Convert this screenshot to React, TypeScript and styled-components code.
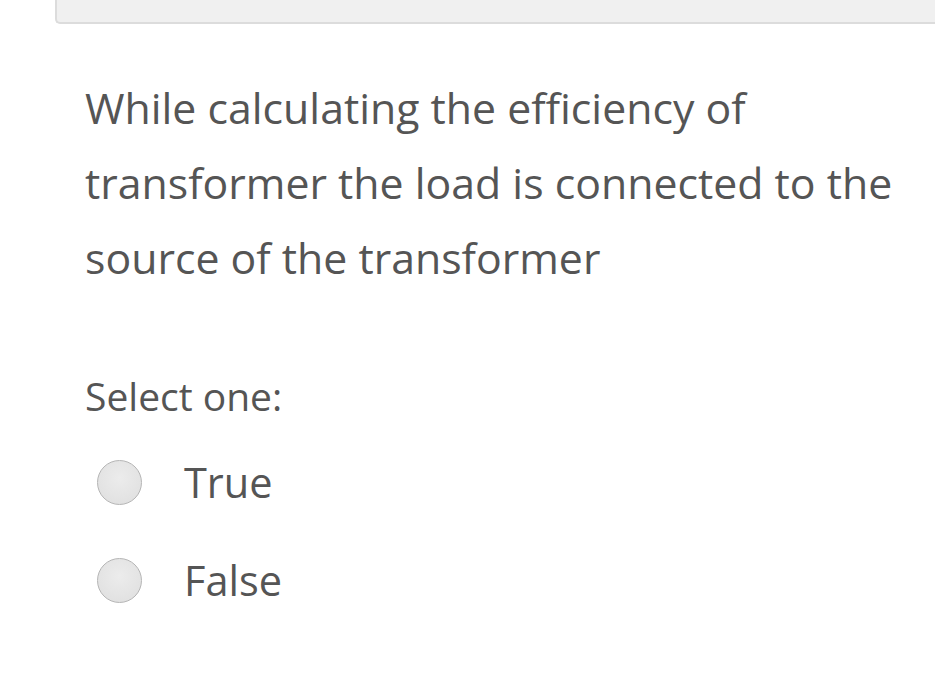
import styled, { createGlobalStyle } from "styled-components";

const GlobalStyle = createGlobalStyle`
  html, body {
    margin: 0;
    padding: 0;
    background: #fff;
  }
  body {
    font-family: "Open Sans", "Liberation Sans", sans-serif;
    color: #555;
  }
`;

const Page = styled.div`
  width: 935px;
  height: 683px;
  overflow: hidden;
`;

const TopBox = styled.div`
  margin-left: 55px;
  height: 22px;
  background: #f0f0f0;
  border-left: 2px solid #dcdcdc;
  border-bottom: 2px solid #dcdcdc;
  border-bottom-left-radius: 5px;
`;

const Content = styled.div`
  padding: 46px 0 0 85px;
`;

const Question = styled.div`
  font-size: 42.8px;
  line-height: 75px;
  color: #555;
  width: 840px;
`;

const Prompt = styled.div`
  margin-top: 76px;
  font-size: 39px;
  line-height: 50px;
`;

const Options = styled.div`
  display: flex;
  flex-direction: column;
  gap: 48px;
  margin-top: 36px;
  padding-left: 12px;
`;

const Option = styled.label`
  display: flex;
  align-items: center;
  gap: 42px;
  font-size: 41.5px;
  line-height: 50px;
`;

const Radio = styled.span`
  width: 43px;
  height: 43px;
  border-radius: 50%;
  border: 1px solid #b5b5b5;
  background: radial-gradient(circle at 50% 40%, #ececec, #dedede);
  flex-shrink: 0;
`;

export default function App() {
  return (
    <Page>
      <GlobalStyle />
      <TopBox />
      <Content>
        <Question>
          While calculating the efficiency of transformer the load is connected
          to the source of the transformer
        </Question>
        <Prompt>Select one:</Prompt>
        <Options>
          <Option>
            <Radio />
            True
          </Option>
          <Option>
            <Radio />
            False
          </Option>
        </Options>
      </Content>
    </Page>
  );
}
